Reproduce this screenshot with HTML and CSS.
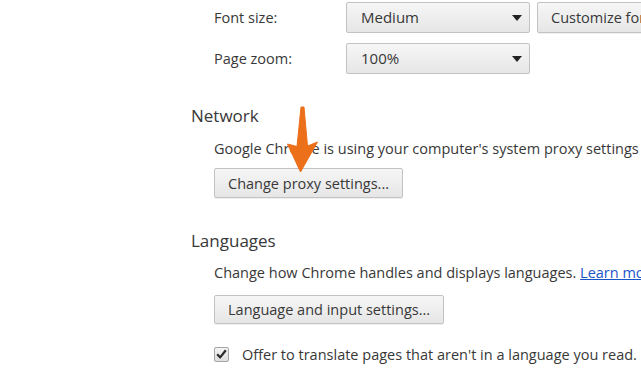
FILE: index.html
```html
<!DOCTYPE html>
<html lang="en">
<head>
<meta charset="UTF-8">
<meta name="viewport" content="width=device-width, initial-scale=1.0">
<title>Settings</title>
<link rel="stylesheet" href="styles.css">
</head>
<body>
<div class="page">
    <div class="section">
        <div class="section-body">
            <div class="row">
                <span class="label">Font size:</span>
                <div class="select">Medium<span class="caret"></span></div>
                <button class="btn">Customize fonts...</button>
            </div>
            <div class="row">
                <span class="label">Page zoom:</span>
                <div class="select">100%<span class="caret"></span></div>
            </div>
        </div>
    </div>

    <div class="section network">
        <h3>Network</h3>
        <div class="section-body">
            <p class="text proxy-text">Google Chrome is using your computer's system proxy settings to connect to the network.</p>
            <button class="btn proxy-btn">Change proxy settings...</button>
        </div>
    </div>

    <div class="section languages">
        <h3>Languages</h3>
        <div class="section-body">
            <p class="text lang-text">Change how Chrome handles and displays languages. <a href="#">Learn more</a></p>
            <button class="btn lang-btn">Language and input settings...</button>
            <label class="check-row">
                <span class="checkbox">
                    <svg width="11" height="10" viewBox="0 0 11 10"><path d="M1.2 5.2 L4.2 8.4 L9.8 1.2" fill="none" stroke="#2b2b2b" stroke-width="2.2" stroke-linejoin="round"/></svg>
                </span>
                Offer to translate pages that aren't in a language you read.
            </label>
        </div>
    </div>

    <!-- orange callout arrow pointing at the proxy button -->
    <svg class="pointer" width="40" height="80" viewBox="0 0 40 80">
        <path d="M24 2 L27.5 41 L37.5 37 L20.5 67 L7.5 39 L17 41.5 L21 2 Z" fill="#ec6f1a" stroke="#ec6f1a" stroke-width="1" stroke-linejoin="round"/>
    </svg>
</div>
</body>
</html>
```

FILE: styles.css
```css
body {
    margin: 0;
    background: #fff;
    font-family: "Open Sans", "Noto Sans", sans-serif;
    font-size: 14.5px;
    color: #383838;
    overflow: hidden;
}
.page {
    position: relative;
    width: 641px;
    height: 385px;
    padding-left: 191px;
    padding-top: 2px;
    box-sizing: border-box;
    white-space: nowrap;
    overflow: hidden;
}
.section h3 {
    margin: 0;
    font-size: 17px;
    font-weight: normal;
    line-height: 22px;
    color: #383838;
}
.section-body {
    padding-left: 23px;
}
.row {
    display: flex;
    align-items: center;
    margin-bottom: 10px;
}
.label {
    flex-shrink: 0;
    width: 132px;
}
.select {
    flex-shrink: 0;
    position: relative;
    width: 184px;
    height: 31px;
    box-sizing: border-box;
    padding-left: 14px;
    line-height: 29px;
    border: 1px solid #c2c2c2;
    border-radius: 2px;
    background: linear-gradient(#f6f6f6, #e6e6e6);
    font-size: 15px;
    color: #383838;
}
.caret {
    position: absolute;
    right: 7px;
    top: 12px;
    border-left: 5px solid transparent;
    border-right: 5px solid transparent;
    border-top: 6px solid #222;
}
.btn {
    flex-shrink: 0;
    height: 30px;
    padding: 0 13px;
    border: 1px solid #c2c2c2;
    border-radius: 2px;
    background: linear-gradient(#f6f6f6, #e6e6e6);
    font-family: inherit;
    font-size: 14.5px;
    color: #383838;
    white-space: nowrap;
    box-shadow: 0 1px 0 rgba(0, 0, 0, 0.06);
}
.row .btn {
    height: 31px;
    margin-left: 7px;
}
.network {
    margin-top: 31px;
}
.text {
    margin: 0;
    line-height: 20px;
}
.text a {
    color: #1a55c8;
}
.proxy-text {
    margin: 12px 0 9px;
}
.proxy-btn {
    width: 189px;
}
.languages {
    margin-top: 32px;
}
.lang-text {
    margin: 11px 0 12px;
}
.lang-btn {
    width: 230px;
    height: 29px;
}
.check-row {
    display: flex;
    align-items: center;
    height: 20px;
    margin-top: 20px;
}
.checkbox {
    display: flex;
    align-items: center;
    justify-content: center;
    width: 15px;
    height: 15px;
    box-sizing: border-box;
    margin-right: 13px;
    border: 1px solid #a6a6a6;
    border-radius: 2px;
    background: linear-gradient(#f4f4f4, #dedede);
}
.pointer {
    position: absolute;
    left: 280px;
    top: 105px;
}
```
